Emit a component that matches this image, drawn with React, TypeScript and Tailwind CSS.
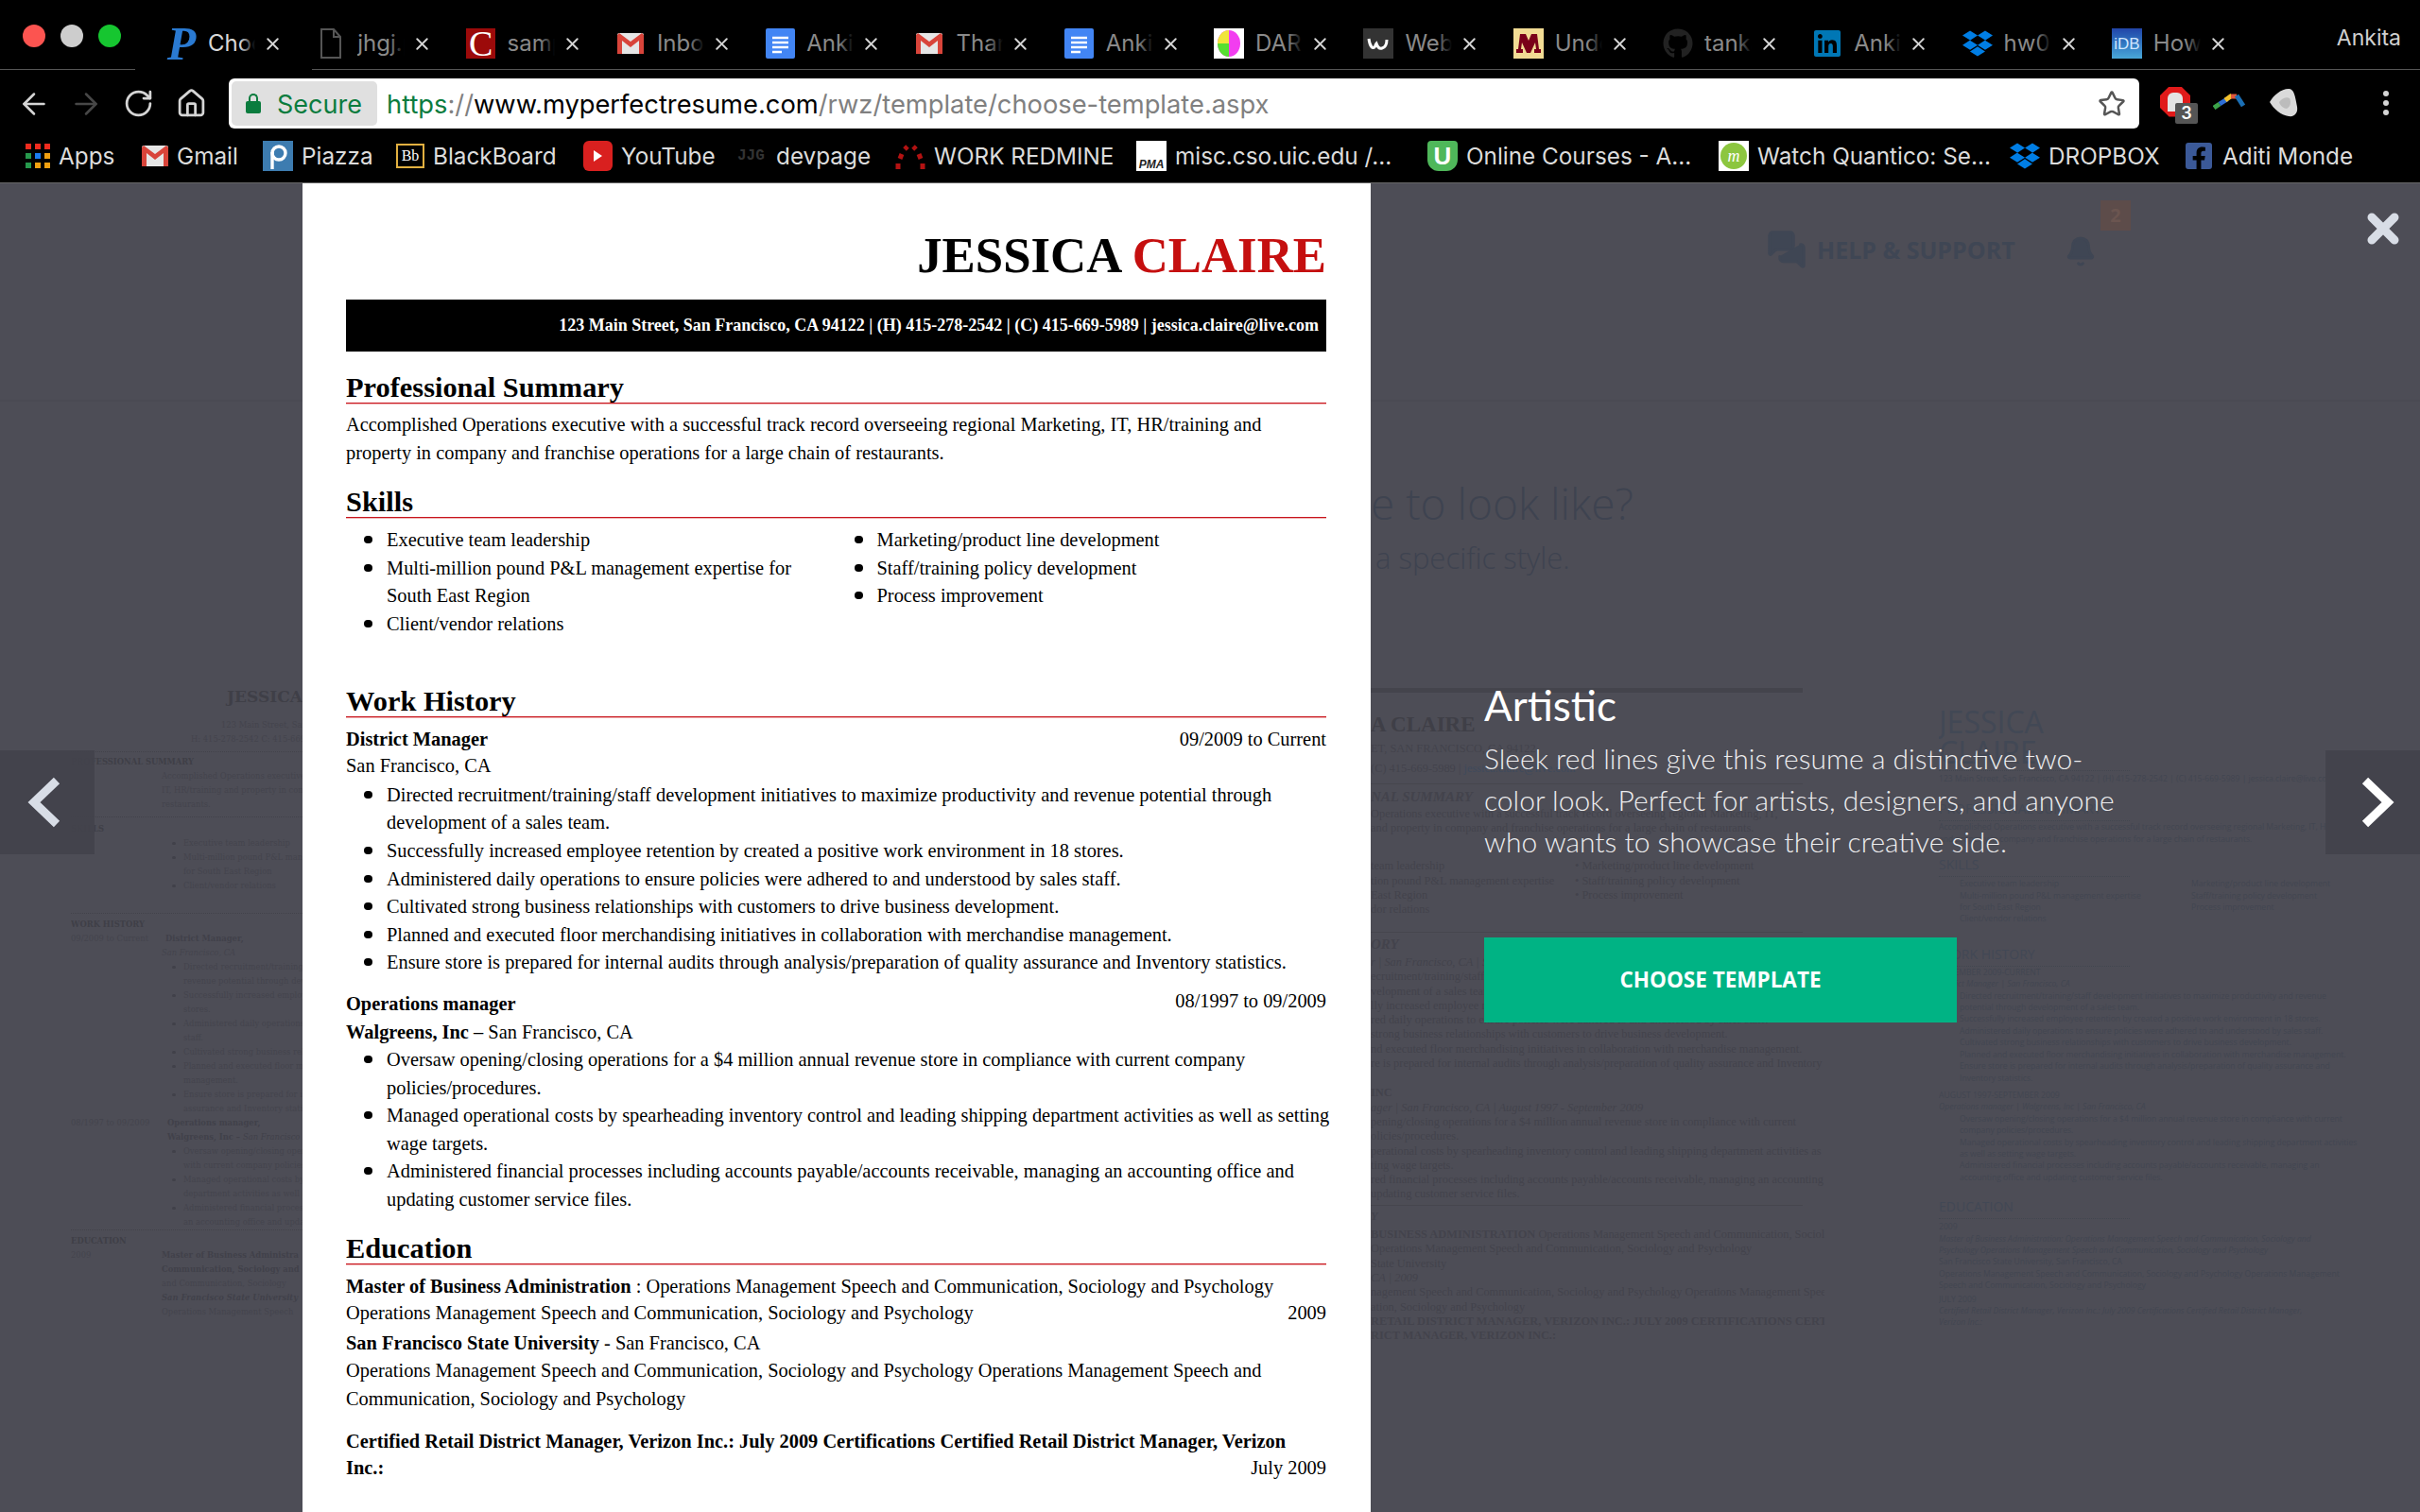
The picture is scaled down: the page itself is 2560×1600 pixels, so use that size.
import React from 'react';
import { ArrowLeft, ArrowRight, RotateCw, House, Star, X, Bell, MessagesSquare } from 'lucide-react';
import { FaDropbox, FaGithub, FaLinkedin, FaFacebookSquare } from 'react-icons/fa';

const Gmail = () => (
  <svg width="28" height="22" viewBox="0 0 28 22">
    <rect width="28" height="22" rx="2" fill="#e6e6e6" />
    <path d="M0 2v20h5V8l9 7 9-7v14h5V2l-2-2-12 9L2 0z" fill="#d8443a" />
  </svg>
);
const Doc = () => (
  <svg width="31" height="32" viewBox="0 0 31 32">
    <rect width="31" height="32" rx="2" fill="#4285f4" />
    <path d="M7 10h17M7 15h17M7 20h17M7 25h10" stroke="#fff" strokeWidth="2.4" />
  </svg>
);
const BlankDoc = () => (
  <svg width="22" height="32" viewBox="0 0 22 32" fill="none" stroke="#555" strokeWidth="2">
    <path d="M1 1h13l7 8v22H1zM14 1v8h7" />
  </svg>
);
const LogoP = () => <span className="font-['Liberation_Serif',serif] font-bold italic text-[50px] leading-none text-[#2a7ad2]">P</span>;
const LogoC = () => (
  <span className="w-[31px] h-[32px] bg-[#9c0a0a] flex items-center justify-center font-['Liberation_Serif',serif] text-[38px] leading-none text-white">C</span>
);
const Darwin = () => (
  <svg width="32" height="32" viewBox="0 0 32 32">
    <rect width="32" height="32" fill="#fff" />
    <ellipse cx="16" cy="16" rx="12" ry="14" fill="#f23df0" />
    <path d="M4 16a12 14 0 0 0 12 14V16z" fill="#55e030" />
    <path d="M4 16a12 14 0 0 1 12-14V16z" fill="#f0e63a" />
  </svg>
);
const Webflow = () => (
  <svg width="32" height="32" viewBox="0 0 32 32">
    <rect width="32" height="32" fill="#333" />
    <path d="M6 11c1 8 4 11 6 9 1-1 1-3 2-4 1 3 3 6 6 5 4-1 5-6 5-9" fill="none" stroke="#fff" strokeWidth="3" />
  </svg>
);
const Umn = () => (
  <svg width="32" height="32" viewBox="0 0 32 32">
    <rect width="32" height="32" fill="#f2dc94" />
    <path d="M3 26h7v-4H8l1-7 5 11h4l5-11 1 7h-2v4h7v-4h-2L25 6h-6l-3 7-3-7H7L5 22H3z" fill="#7a0019" />
  </svg>
);
const Imdb = () => (
  <span className="w-[32px] h-[32px] bg-gradient-to-b from-[#2244a8] to-[#4aa8d8] flex items-center justify-center font-['Liberation_Sans',sans-serif] text-[17px] leading-none text-[#cfe6ff]">iDB</span>
);
const Apps = () => {
  const colors = ['bg-[#f02b1e]', 'bg-[#f02b1e]', 'bg-[#f02b1e]', 'bg-[#26994d]', 'bg-[#1a7bf0]', 'bg-[#f0a010]', 'bg-[#26994d]', 'bg-[#f0a010]', 'bg-[#f0a010]'];
  return (
    <span className="grid grid-cols-3 gap-[4px] w-[26px]">
      {colors.map((c, i) => <span key={i} className={`w-[6px] h-[6px] ${c}`} />)}
    </span>
  );
};
const Piazza = () => (
  <svg width="32" height="32" viewBox="0 0 32 32">
    <rect width="32" height="32" fill="#3d7cb0" />
    <circle cx="17" cy="13" r="7" fill="none" stroke="#fff" strokeWidth="3.4" />
    <path d="M10 12v18" stroke="#fff" strokeWidth="3.4" />
  </svg>
);
const Bb = () => (
  <span className="w-[30px] h-[26px] bg-black border-2 border-[#e2b040] flex items-center justify-center font-['Liberation_Serif',serif] text-[16px] leading-none text-white">Bb</span>
);
const YouTube = () => (
  <span className="w-[31px] h-[32px] rounded-[6px] bg-[#d9201f] flex items-center justify-center">
    <span className="w-0 h-0 border-y-[6px] border-y-transparent border-l-[9px] border-l-white" />
  </span>
);
const Dev = () => <span className="w-[32px] font-['Liberation_Mono',monospace] font-bold text-[16px] text-[#333]">JJG</span>;
const Redmine = () => (
  <svg width="32" height="32" viewBox="0 0 32 32" fill="none" stroke="#b31212" strokeWidth="5">
    <path d="M3 30v-6M5 19l2-5M10 9l3-3M19 6l3 3M25 14l2 5M29 24v6" />
  </svg>
);
const Pma = () => (
  <span className="w-[32px] h-[32px] bg-white flex items-end justify-center font-['Liberation_Sans',sans-serif] font-bold italic text-[12px] leading-[14px] text-[#222]">PMA</span>
);
const Udacity = () => (
  <span className="w-[32px] h-[32px] rounded-b-[12px] rounded-t-[4px] bg-[#4fb75a] flex items-center justify-center font-['Liberation_Sans',sans-serif] font-bold text-[26px] leading-none text-white">U</span>
);
const Mgreen = () => (
  <span className="w-[32px] h-[32px] bg-white flex items-center justify-center">
    <span className="w-[28px] h-[28px] rounded-full bg-[#8cc63f] flex items-center justify-center font-['Liberation_Serif',serif] italic text-[18px] leading-none text-white">m</span>
  </span>
);

const tabs: [React.ReactNode, string][] = [
  [<LogoP />, 'Choose'],
  [<BlankDoc />, 'jhgj.pdf'],
  [<LogoC />, 'sample'],
  [<Gmail />, 'Inbox'],
  [<Doc />, 'Anki'],
  [<Gmail />, 'Thank'],
  [<Doc />, 'Anki'],
  [<Darwin />, 'DARPA'],
  [<Webflow />, 'Web'],
  [<Umn />, 'Under'],
  [<FaGithub size={32} color="#222" />, 'tanka'],
  [<FaLinkedin size={32} color="#0077b5" />, 'Anki'],
  [<FaDropbox size={32} color="#007ee5" />, 'hw01'],
  [<Imdb />, 'How'],
];

const bookmarks: [React.ReactNode, string, string][] = [
  [<Apps />, 'Apps', 'w-[123px]'],
  [<Gmail />, 'Gmail', 'w-[128px]'],
  [<Piazza />, 'Piazza', 'w-[141px]'],
  [<Bb />, 'BlackBoard', 'w-[198px]'],
  [<YouTube />, 'YouTube', 'w-[163px]'],
  [<Dev />, 'devpage', 'w-[167px]'],
  [<Redmine />, 'WORK REDMINE', 'w-[255px]'],
  [<Pma />, 'misc.cso.uic.edu /...', 'w-[308px]'],
  [<Udacity />, 'Online Courses - A...', 'w-[308px]'],
  [<Mgreen />, 'Watch Quantico: Se...', 'w-[308px]'],
  [<FaDropbox size={32} color="#007ee5" />, 'DROPBOX', 'w-[184px]'],
  [<FaFacebookSquare size={32} color="#3b5998" />, 'Aditi Monde', 'w-[190px]'],
];

const BrowserChrome = () => (
  <div className="bg-black h-[194px] border-b border-[#666] font-['Inter',sans-serif] shrink-0">
    <div className="relative h-[73px] flex items-center pl-[176px] pt-[19px]">
      <span className="absolute left-[24px] top-[26px] w-[24px] h-[24px] rounded-full bg-[#fc5450]" />
      <span className="absolute left-[64px] top-[26px] w-[24px] h-[24px] rounded-full bg-[#cdcdcd]" />
      <span className="absolute left-[104px] top-[26px] w-[24px] h-[24px] rounded-full bg-[#16c630]" />
      {tabs.map(([icon, label], i) => (
        <div key={i} className="w-[158.3px] flex items-center shrink-0">
          <span className="w-[32px] h-[32px] flex items-center justify-center shrink-0">{icon}</span>
          <span className={`relative ml-[12px] w-[50px] overflow-hidden whitespace-nowrap text-[24px] leading-[32px] ${i === 0 ? 'text-[#d8d8d8]' : 'text-[#8a8a8a]'}`}>
            {label}
            <span className="absolute inset-y-0 right-0 w-[16px] bg-gradient-to-r from-transparent to-black" />
          </span>
          <X size={21} strokeWidth={2.2} color="#d4d4d4" className="ml-[8px]" />
        </div>
      ))}
      <span className="absolute right-[20px] top-[22px] text-[23px] leading-[36px] text-[#d0d0d0]">Ankita</span>
    </div>
    <div className="flex h-px">
      <div className="w-[143px] bg-[#555]" />
      <div className="w-[187px]" />
      <div className="flex-1 bg-[#555]" />
    </div>
    <div className="h-[63px] flex items-center pl-[18px] pt-[8px]">
      <ArrowLeft size={36} strokeWidth={1.7} color="#d5d5d5" />
      <ArrowRight size={36} strokeWidth={1.7} color="#474747" className="ml-[19px]" />
      <RotateCw size={33} strokeWidth={2} color="#d5d5d5" className="ml-[21px]" />
      <House size={33} strokeWidth={2} color="#d5d5d5" className="ml-[23px]" />
      <div className="ml-[23px] w-[2021px] h-[53px] bg-white rounded-[6px] p-[3px] flex items-center">
        <div className="w-[154px] h-[47px] rounded-[5px] bg-[#e0e0e0] flex items-center pl-[15px] pt-[3px] text-[#0b7c3e] text-[27px]">
          <span className="relative w-[16px] h-[13px] mt-[5px] rounded-[2px] bg-[#0b7c3e]">
            <span className="absolute left-[3px] -top-[8px] w-[10px] h-[10px] rounded-t-full border-2 border-b-0 border-[#0b7c3e]" />
          </span>
          <span className="ml-[17px]">Secure</span>
        </div>
        <div className="ml-[10px] pt-[3px] text-[27.3px] whitespace-nowrap text-[#808080]">
          <span className="text-[#0b7c3e]">https</span>://<span className="text-black">www.myperfectresume.com</span>/rwz/template/choose-template.aspx
        </div>
        <Star size={30} strokeWidth={2} color="#555" className="ml-auto mr-[11px]" />
      </div>
      <div className="ml-[22px] w-[32px] h-[32px] mb-[4px] bg-[#e11a1a] [clip-path:polygon(30%_0,70%_0,100%_30%,100%_70%,70%_100%,30%_100%,0_70%,0_30%)] flex items-center justify-center">
        <span className="w-[16px] h-[20px] rounded-t-[6px] bg-[#e4e4e4]" />
      </div>
      <span className="-ml-[16px] mt-[20px] z-10 w-[24px] h-[22px] rounded-[2px] bg-[#555] text-white text-[18px] font-semibold leading-[22px] text-center">3</span>
      <svg width="34" height="18" viewBox="0 0 34 18" className="ml-[16px] mb-[6px]" fill="none" strokeWidth="5">
        <path d="M1 16l6-4" stroke="#3ca34a" />
        <path d="M7 12l8-5" stroke="#2f6fd6" />
        <path d="M13 8l7-5" stroke="#f2c22e" />
        <path d="M19 4l6 0" stroke="#e0573a" />
        <path d="M25 3l7 11" stroke="#1b6fb5" />
      </svg>
      <svg width="32" height="32" viewBox="0 0 32 32" className="ml-[24px] mb-[2px]">
        <path d="M2 15C6 8 14 1 22 1c6 0 7 8 9 19 1 6-2 11-9 10C14 29 6 22 2 15z" fill="#dadada" />
        <path d="M12 15c3-4 8-6 11-4 2 4 1 9-3 11-3 0-7-3-8-7z" fill="#bcbcbc" />
      </svg>
      <span className="ml-[90px] flex flex-col gap-[4px] mb-[2px]">
        <span className="w-[6px] h-[6px] rounded-full bg-[#d5d5d5]" />
        <span className="w-[6px] h-[6px] rounded-full bg-[#d5d5d5]" />
        <span className="w-[6px] h-[6px] rounded-full bg-[#d5d5d5]" />
      </span>
    </div>
    <div className="h-[56px] flex items-center pl-[27px] text-[24.3px] text-[#dcdcdc]">
      {bookmarks.map(([icon, label, w], i) => (
        <div key={i} className={`${w} flex items-center gap-[9px] shrink-0 whitespace-nowrap`}>
          <span className="shrink-0 flex items-center justify-center">{icon}</span>
          <span>{label}</span>
        </div>
      ))}
    </div>
  </div>
);

const Heading = ({ children, className }: { children: React.ReactNode; className: string }) => (
  <h2 className={`${className} h-[34px] border-b border-[#c8141c] shadow-[0_1px_0_#eeb0b0] text-[30.4px] leading-[34px] font-bold text-black`}>{children}</h2>
);

const Bullets = ({ items, className = '' }: { items: React.ReactNode[]; className?: string }) => (
  <ul className={`pl-[43px] whitespace-nowrap ${className}`}>
    {items.map((it, i) => (
      <li key={i} className="relative before:absolute before:-left-[24px] before:top-[10px] before:w-[9px] before:h-[8px] before:rounded-full before:bg-black before:content-['']">{it}</li>
    ))}
  </ul>
);

const Resume = () => (
  <div className="relative z-10 w-[1130px] h-full bg-white pt-[46px] pl-[46px] pr-[47px] overflow-hidden font-['Liberation_Serif',serif] text-[20.4px] leading-[29.6px] text-black">
    <h1 className="text-right text-[52.8px] leading-[60px] font-bold">JESSICA <span className="text-[#c50f0f]">CLAIRE</span></h1>
    <div className="mt-[17px] h-[55px] bg-black text-white font-bold text-[18px] leading-[55px] text-right pr-[8px] whitespace-nowrap">
      123 Main Street, San Francisco, CA 94122 | (H) 415-278-2542 | (C) 415-669-5989 | jessica.claire@live.com
    </div>
    <Heading className="mt-[21px]">Professional Summary</Heading>
    <p className="mt-[8px] whitespace-nowrap">
      Accomplished Operations executive with a successful track record overseeing regional Marketing, IT, HR/training and<br />
      property in company and franchise operations for a large chain of restaurants.
    </p>
    <Heading className="mt-[20px]">Skills</Heading>
    <div className="mt-[9px] grid grid-cols-2">
      <Bullets items={['Executive team leadership', <>Multi-million pound P&amp;L management expertise for<br />South East Region</>, 'Client/vendor relations']} />
      <Bullets items={['Marketing/product line development', 'Staff/training policy development', 'Process improvement']} />
    </div>
    <Heading className="mt-[49px]">Work History</Heading>
    <div className="mt-[9px] flex justify-between">
      <span className="font-bold">District Manager</span>
      <span>09/2009 to Current</span>
    </div>
    <div className="-mt-[1px]">San Francisco, CA</div>
    <Bullets
      className="mt-[1px]"
      items={[
        <>Directed recruitment/training/staff development initiatives to maximize productivity and revenue potential through<br />development of a sales team.</>,
        'Successfully increased employee retention by created a positive work environment in 18 stores.',
        'Administered daily operations to ensure policies were adhered to and understood by sales staff.',
        'Cultivated strong business relationships with customers to drive business development.',
        'Planned and executed floor merchandising initiatives in collaboration with merchandise management.',
        'Ensure store is prepared for internal audits through analysis/preparation of quality assurance and Inventory statistics.',
      ]}
    />
    <div className="mt-[14px] flex justify-between">
      <span className="font-bold">Operations manager</span>
      <span className="-mt-[3px]">08/1997 to 09/2009</span>
    </div>
    <div><span className="font-bold">Walgreens, Inc</span> – San Francisco, CA</div>
    <Bullets
      items={[
        <>Oversaw opening/closing operations for a $4 million annual revenue store in compliance with current company<br />policies/procedures.</>,
        <>Managed operational costs by spearheading inventory control and leading shipping department activities as well as setting<br />wage targets.</>,
        <>Administered financial processes including accounts payable/accounts receivable, managing an accounting office and<br />updating customer service files.</>,
      ]}
    />
    <Heading className="mt-[19px]">Education</Heading>
    <div className="mt-[9px] whitespace-nowrap"><span className="font-bold">Master of Business Administration</span> : Operations Management Speech and Communication, Sociology and Psychology</div>
    <div className="flex justify-between -mt-[1px]">
      <span>Operations Management Speech and Communication, Sociology and Psychology</span>
      <span>2009</span>
    </div>
    <div className="mt-[2px]"><span className="font-bold">San Francisco State University</span> - San Francisco, CA</div>
    <div className="whitespace-nowrap">Operations Management Speech and Communication, Sociology and Psychology Operations Management Speech and<br />Communication, Sociology and Psychology</div>
    <div className="mt-[15px] font-bold whitespace-nowrap">Certified Retail District Manager, Verizon Inc.: July 2009 Certifications Certified Retail District Manager, Verizon</div>
    <div className="flex justify-between -mt-[1px]">
      <span className="font-bold">Inc.:</span>
      <span>July 2009</span>
    </div>
  </div>
);

const LeftBullet = ({ t }: { t: string }) => (
  <div className={`pl-[119px] relative ${/^[A-Z]/.test(t) ? "before:absolute before:left-[107px] before:top-[6px] before:w-[4px] before:h-[3px] before:rounded-full before:bg-[#41414a] before:content-['']" : ''}`}>{t}</div>
);

const GhostLeft = () => (
  <div className="absolute left-[75px] top-[531px] w-[245px] font-['DejaVu_Serif',serif] text-[8.4px] leading-[15px] text-[#44444d] whitespace-nowrap overflow-hidden">
    <div className="h-[24px] pl-[165px] text-[17px] leading-[24px] font-bold text-[#3f3f47]">JESSICA</div>
    <div className="mt-[11px] pl-[159px]">123 Main Street, San</div>
    <div className="pl-[127px]">H: 415-278-2542 C: 415-669</div>
    <div className="mt-[5px] border-t border-dotted border-[#42424a] pt-[3px] font-bold text-[#3f3f47]">PROFESSIONAL SUMMARY</div>
    <div className="pl-[96px]">Accomplished Operations executive</div>
    <div className="pl-[96px]">IT, HR/training and property in com</div>
    <div className="pl-[96px]">restaurants.</div>
    <div className="mt-[5px] border-t border-dotted border-[#42424a] pt-[5px] font-bold text-[#3f3f47]">SKILLS</div>
    {['Executive team leadership', 'Multi-million pound P&L man', 'for South East Region', 'Client/vendor relations'].map((t, i) => (
      <LeftBullet key={i} t={t} />
    ))}
    <div className="mt-[21px] border-t border-dotted border-[#42424a] pt-[4px] font-bold text-[#3f3f47]">WORK HISTORY</div>
    <div className="flex"><span className="w-[100px]">09/2009 to Current</span><span className="font-bold text-[#41414a]">District Manager,</span></div>
    <div className="pl-[96px] italic">San Francisco, CA</div>
    {['Directed recruitment/training', 'revenue potential through dev', 'Successfully increased employ', 'stores.', 'Administered daily operations', 'staff.', 'Cultivated strong business rela', 'Planned and executed floor m', 'management.', 'Ensure store is prepared for in', 'assurance and Inventory statis'].map((t, i) => (
      <LeftBullet key={i} t={t} />
    ))}
    <div className="flex"><span className="w-[102px]">08/1997 to 09/2009</span><span className="font-bold text-[#41414a]">Operations manager,</span></div>
    <div className="pl-[102px] font-bold text-[#41414a]">Walgreens, Inc – <span className="font-normal italic">San Francisco</span></div>
    {['Oversaw opening/closing oper', 'with current company policies', 'Managed operational costs by', 'department activities as well a', 'Administered financial proces', 'an accounting office and upda'].map((t, i) => (
      <LeftBullet key={i} t={t} />
    ))}
    <div className="border-t border-dotted border-[#42424a] pt-[4px] font-bold text-[#3f3f47]">EDUCATION</div>
    <div className="flex"><span className="w-[96px]">2009</span><span className="font-bold text-[#41414a]">Master of Business Administra</span></div>
    <div className="pl-[96px] font-bold text-[#41414a]">Communication, Sociology and</div>
    <div className="pl-[96px]">and Communication, Sociology</div>
    <div className="pl-[96px] italic font-bold text-[#41414a]">San Francisco State University</div>
    <div className="pl-[96px]">Operations Management Speech</div>
  </div>
);

const GhostMiddle = () => (
  <div className="absolute left-[1450px] top-[534px] w-[480px] font-['Liberation_Serif',serif] text-[12.4px] leading-[15.3px] text-[#43434c] whitespace-nowrap overflow-hidden">
    <div className="h-[5px] w-[457px] bg-[#44444c]" />
    <div className="mt-[22px] h-[24px] text-[23px] leading-[24px] font-bold text-[#3f3f47]">A CLAIRE</div>
    <div className="mt-[6px]">ET, SAN FRANCISCO, CA 94122</div>
    <div className="mt-[6px]">(C) 415-669-5989 | <span className="text-[#3f4a5c]">jessica.claire@live.com</span></div>
    <div className="mt-[7px] w-[457px] border-t border-[#46464e] pt-[6px] font-bold italic text-[15px]">NAL SUMMARY</div>
    <div className="mt-[3px]">Operations executive with a successful track record overseeing regional Marketing, IT,</div>
    <div>and property in company and franchise operations for a large chain of restaurants.</div>
    <div className="mt-[25px] flex"><span className="w-[216px]">team leadership</span><span>• Marketing/product line development</span></div>
    <div className="flex"><span className="w-[216px]">tion pound P&amp;L management expertise</span><span>• Staff/training policy development</span></div>
    <div className="flex"><span className="w-[216px]">East Region</span><span>• Process improvement</span></div>
    <div>dor relations</div>
    <div className="mt-[15px] w-[457px] border-t border-[#46464e] pt-[5px] font-bold italic text-[15px]">ORY</div>
    <div className="mt-[4px] italic">r | San Francisco, CA | Sep</div>
    {['ecruitment/training/staff development', 'velopment of a sales team.', 'lly increased employee retention by created', 'red daily operations to ensure policies were adhered to and understood by sales staff.', ' strong business relationships with customers to drive business development.', 'nd executed floor merchandising initiatives in collaboration with merchandise management.', 're is prepared for internal audits through analysis/preparation of quality assurance and Inventory'].map((t, i) => (
      <div key={i}>{t}</div>
    ))}
    <div className="mt-[16px] font-bold">INC</div>
    <div className="italic">ager | San Francisco, CA | August 1997 - September 2009</div>
    {['pening/closing operations for a $4 million annual revenue store in compliance with current', 'olicies/procedures.', 'perational costs by spearheading inventory control and leading shipping department activities as', 'ting wage targets.', 'red financial processes including accounts payable/accounts receivable, managing an accounting', 'updating customer service files.'].map((t, i) => (
      <div key={i}>{t}</div>
    ))}
    <div className="mt-[3px] w-[457px] border-t border-[#46464e] pt-[4px] font-bold italic">Y</div>
    <div className="mt-[4px]"><span className="font-bold">BUSINESS ADMINISTRATION</span> Operations Management Speech and Communication, Sociology</div>
    <div>Operations Management Speech and Communication, Sociology and Psychology</div>
    <div>State University</div>
    <div className="italic">CA | 2009</div>
    <div>nagement Speech and Communication, Sociology and Psychology Operations Management Speech</div>
    <div>ation, Sociology and Psychology</div>
    <div className="font-bold">RETAIL DISTRICT MANAGER, VERIZON INC.: JULY 2009 CERTIFICATIONS CERTIFIED</div>
    <div className="font-bold">RICT MANAGER, VERIZON INC.:</div>
  </div>
);

const dots = 'mt-[3px] w-[202px] border-t border-dotted border-[#42464f]';

const GhostRight = () => (
  <div className="absolute left-[2051px] top-[554px] w-[509px] font-['Open_Sans',sans-serif] text-[8.6px] leading-[12.4px] text-[#424651] whitespace-nowrap overflow-hidden">
    <div className="text-[32px] leading-[32px] text-[#424855]">JESSICA</div>
    <div className="text-[32px] leading-[32px] text-[#424855]">CLAIRE</div>
    <div className={dots} />
    <div className="mt-[2px]">123 Main Street, San Francisco, CA 94122 | (H) 415-278-2542 | (C) 415-669-5989 | jessica.claire@live.com</div>
    <div className="mt-[17px] text-[14px] leading-[18px] text-[#424855]">PROFESSIONAL SUMMARY</div>
    <div className={dots} />
    <div>Accomplished Operations executive with a successful track record overseeing regional Marketing, IT, HR/training</div>
    <div>and property in company and franchise operations for a large chain of restaurants.</div>
    <div className="mt-[12px] text-[14px] leading-[18px] text-[#424855]">SKILLS</div>
    <div className={dots} />
    <div className="mt-[1px] grid grid-cols-[245px_1fr] pl-[22px]">
      <div>
        <div>Executive team leadership</div>
        <div>Multi-million pound P&amp;L management expertise</div>
        <div>for South East Region</div>
        <div>Client/vendor relations</div>
      </div>
      <div>
        <div>Marketing/product line development</div>
        <div>Staff/training policy development</div>
        <div>Process improvement</div>
      </div>
    </div>
    <div className="mt-[22px] text-[14px] leading-[18px] text-[#424855]">WORK HISTORY</div>
    <div className={dots} />
    <div>DECEMBER 2009-CURRENT</div>
    <div className="italic">District Manager | San Francisco, CA</div>
    <div className="pl-[22px]">
      <div>Directed recruitment/training/staff development initiatives to maximize productivity and revenue</div>
      <div>potential through development of a sales team.</div>
      <div>Successfully increased employee retention by created a positive work environment in 18 stores.</div>
      <div>Administered daily operations to ensure policies were adhered to and understood by sales staff.</div>
      <div>Cultivated strong business relationships with customers to drive business development.</div>
      <div>Planned and executed floor merchandising initiatives in collaboration with merchandise management.</div>
      <div>Ensure store is prepared for internal audits through analysis/preparation of quality assurance and</div>
      <div>Inventory statistics.</div>
    </div>
    <div className="mt-[6px]">AUGUST 1997-SEPTEMBER 2009</div>
    <div className="italic">Operations manager | Walgreens, Inc | San Francisco, CA</div>
    <div className="pl-[22px]">
      <div>Oversaw opening/closing operations for a $4 million annual revenue store in compliance with current</div>
      <div>company policies/procedures.</div>
      <div>Managed operational costs by spearheading inventory control and leading shipping department activities</div>
      <div>as well as setting wage targets.</div>
      <div>Administered financial processes including accounts payable/accounts receivable, managing an</div>
      <div>accounting office and updating customer service files.</div>
    </div>
    <div className="mt-[16px] text-[14px] leading-[18px] text-[#424855]">EDUCATION</div>
    <div className={dots} />
    <div className="mt-[2px]">2009</div>
    <div className="italic">Master of Business Administration: Operations Management Speech and Communication, Sociology and</div>
    <div className="italic">Psychology Operations Management Speech and Communication, Sociology and Psychology</div>
    <div>San Francisco State University, San Francisco, CA</div>
    <div>Operations Management Speech and Communication, Sociology and Psychology Operations Management</div>
    <div>Speech and Communication, Sociology and Psychology</div>
    <div className="mt-[2px]">JULY 2009</div>
    <div className="italic">Certified Retail District Manager, Verizon Inc.: July 2009 Certifications Certified Retail District Manager,</div>
    <div className="italic">Verizon Inc.:</div>
  </div>
);

const GhostPage = () => (
  <div className="absolute inset-0 overflow-hidden font-['Open_Sans',sans-serif]">
    <div className="absolute inset-x-0 top-[229px] border-t-2 border-[#4a4a53]" />
    <div className="absolute left-[1450px] top-[308px] text-[46px] leading-[60px] font-light text-[#3e4350] whitespace-nowrap">e to look like?</div>
    <div className="absolute left-[1455px] top-[376px] text-[31px] leading-[40px] font-light text-[#3e4350] whitespace-nowrap">a specific style.</div>
    <div className="absolute left-[1868px] top-[48px] flex items-center text-[#3f4654]">
      <MessagesSquare size={44} fill="#3f4654" strokeWidth={1.5} />
      <span className="ml-[10px] text-[25px] leading-[44px] font-bold">HELP &amp; SUPPORT</span>
      <Bell size={34} fill="#3f4654" className="ml-[52px] mt-[4px]" />
    </div>
    <div className="absolute left-[2222px] top-[18px] w-[32px] h-[32px] bg-[#5d4c4a] text-[#6b5550] text-[20px] font-bold leading-[32px] text-center">2</div>
    <GhostLeft />
    <GhostMiddle />
    <GhostRight />
  </div>
);

const ArrowBox = ({ side }: { side: 'left' | 'right' }) => (
  <div className={`absolute top-[600px] w-[100px] h-[110px] bg-[#43434b]/90 z-20 flex items-center justify-center ${side === 'left' ? 'left-0' : 'right-0'}`}>
    <svg width="36" height="54" viewBox="0 0 36 54" fill="none" stroke={side === 'left' ? '#d8dde6' : '#ffffff'} strokeWidth="9" strokeLinejoin="miter" className={side === 'left' ? '-ml-[7px]' : 'ml-[10px]'}>
      <path d={side === 'left' ? 'M31 4L7 27l24 23' : 'M5 4l24 23L5 50'} />
    </svg>
  </div>
);

export default function App() {
  return (
    <div className="w-[2560px] h-[1600px] flex flex-col overflow-hidden bg-black">
      <BrowserChrome />
      <main className="relative flex-1 bg-[#4d4d56] pl-[320px] flex min-h-0">
        <GhostPage />
        <Resume />
        <section className="relative z-10 pl-[120px] pt-[527px] w-[800px] font-['Lato',sans-serif] text-white">
          <h3 className="text-[44px] leading-[50px] font-normal">Artistic</h3>
          <p className="mt-[9px] text-[30px] leading-[44px] font-light text-[#ececee] whitespace-nowrap">
            Sleek red lines give this resume a distinctive two-<br />
            color look. Perfect for artists, designers, and anyone<br />
            who wants to showcase their creative side.
          </p>
          <button className="mt-[80px] w-[500px] h-[90px] bg-[#00b384] font-['Open_Sans',sans-serif] font-bold text-[22.5px] text-white">CHOOSE TEMPLATE</button>
        </section>
        <ArrowBox side="left" />
        <ArrowBox side="right" />
        <svg width="36" height="36" viewBox="0 0 36 36" className="absolute right-[21px] top-[30px] z-20" stroke="#d8dde6" strokeWidth="9" strokeLinecap="round">
          <path d="M6 6l24 24M30 6L6 30" />
        </svg>
      </main>
    </div>
  );
}
